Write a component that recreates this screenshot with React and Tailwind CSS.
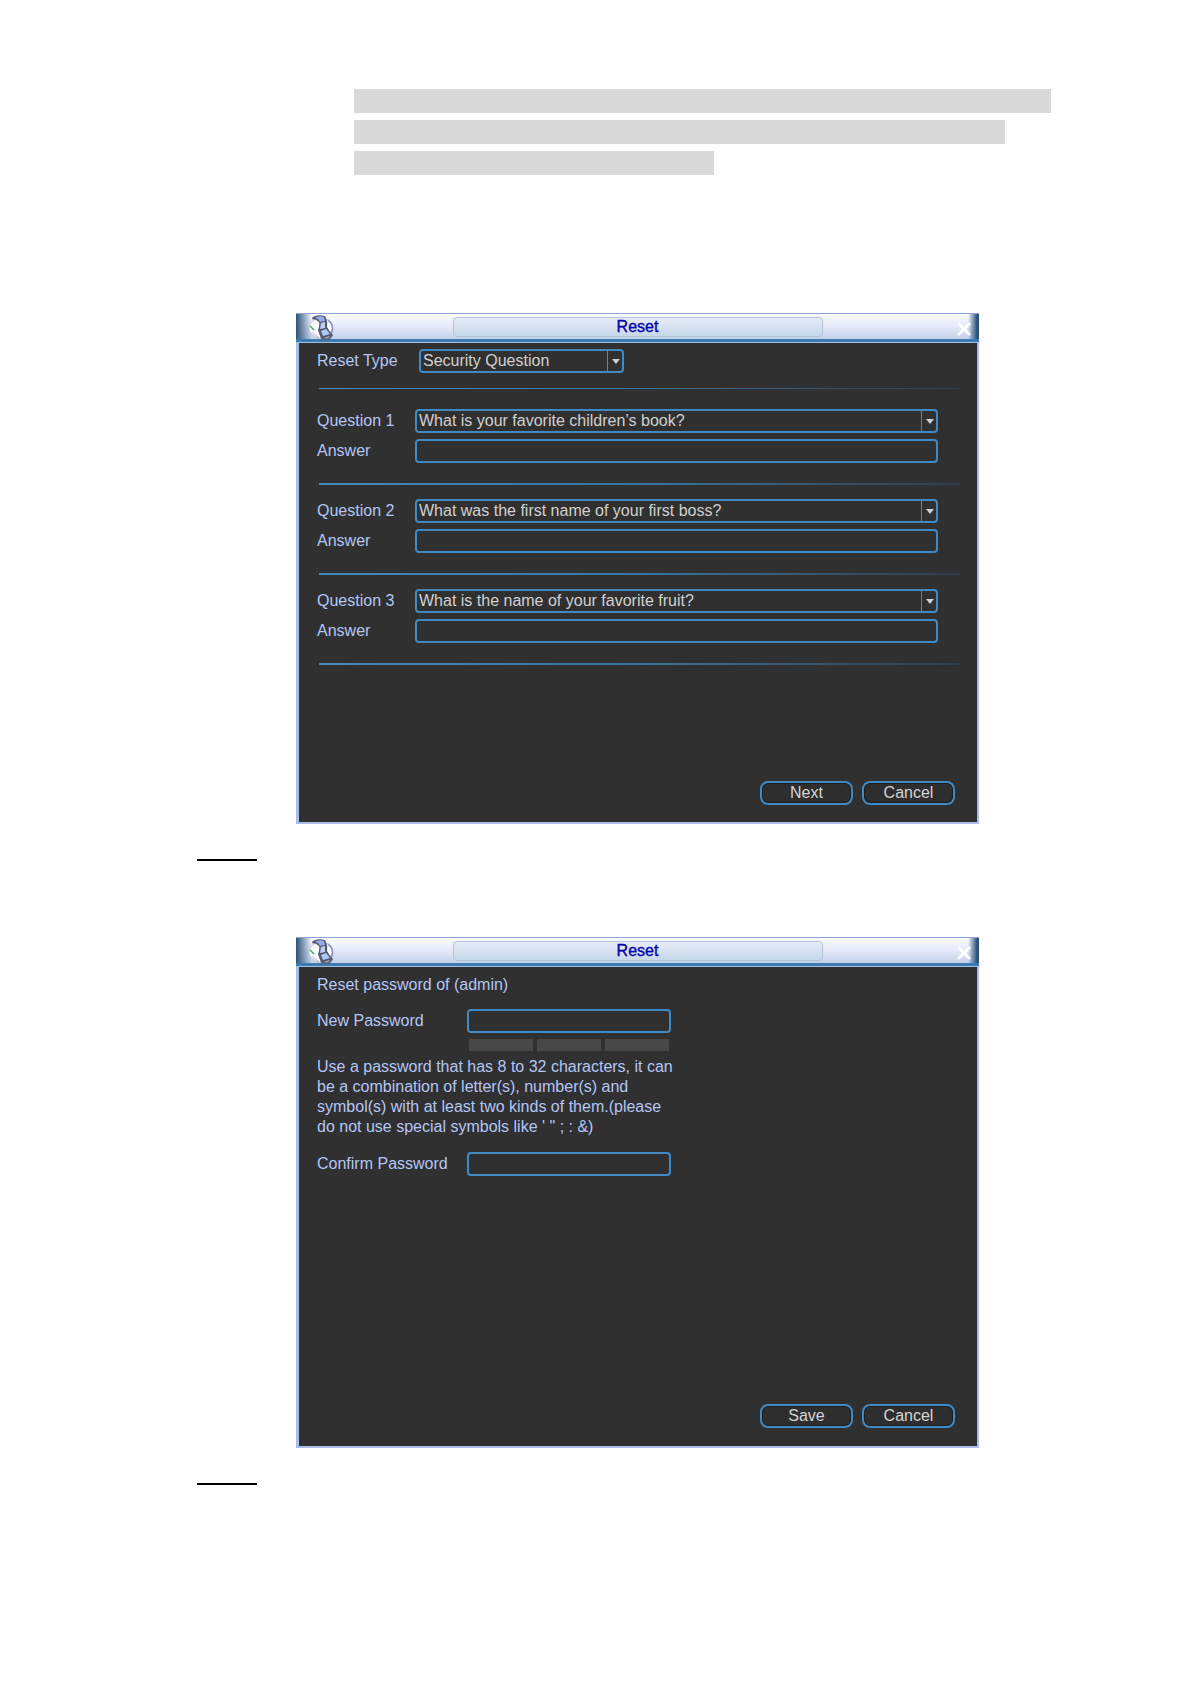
import React, { useState } from 'react'

const questions = [
    "What is your favorite children’s book?",
    "What was the first name of your first boss?",
    "What is the name of your favorite fruit?",
]

const FilmIcon = () => (
    <svg width="27" height="27" viewBox="0 0 27 27" fill="none" aria-hidden="true">
        <ellipse cx="14" cy="14" rx="12" ry="10" fill="#fafbff" stroke="#c3c4e2" />
        <path d="M3 12 L7 16" stroke="#3fa646" strokeWidth="1.5" />
        <path d="M5 18 Q8 22 12 23" stroke="#b9bcd2" strokeWidth="1" />
        <path d="M21 6 Q29 13 23 21" stroke="#8c88c4" strokeWidth="1.5" />
        <path
            d="M5 4 Q9 0 18 2 Q21 7 20 13 Q22 17 26 21 Q24 26 18 26 Q14 26 13 22 L11 16 Q13 11 12 8 Q9 5 5 5 Z"
            fill="#555a70"
        />
        <path d="M8 4 Q12 1 17 3 L18 7 L13 8 Q12 5 8 4 Z" fill="#93abde" />
        <path d="M14 9 L18 8 L18 14 L13 15 Z" fill="#b9cdf6" />
        <path d="M14 17 L19 15 L23 20 L16 22 Z" fill="#acc9f8" />
        <path d="M17 24 L22 22 L23 23 L19 25 Z" fill="#9aa1b5" />
    </svg>
)

const Window = ({ title, children }) => (
    <section className="ml-[99px] mr-[72px] flex min-h-[511px] flex-col">
        {/* TITLE BAR */}
        <header className="flex h-[29px] items-start border-t border-b-3 border-t-[#8ea4d6] border-b-[#3b7db3] bg-[linear-gradient(90deg,#2c5378,transparent_16px,transparent_calc(100%-11px),#2c5378_calc(100%-2px)),linear-gradient(180deg,#f8faff,#e4e9f8_50%,#c3cfe9)] pl-[11px] pr-2">
            <FilmIcon />
            <div className="mr-4 flex flex-1 justify-center">
                <h2 className="mt-[3px] h-5 w-[370px] rounded-sm border border-[#b4c6de] bg-linear-to-b from-[#e6ebf8] to-[#c6d8ea] text-center text-base leading-[18px] text-[#0505a8] [-webkit-text-stroke:0.4px_#0505a8]">
                    {title}
                </h2>
            </div>
            <button type="button" aria-label="Close" className="mt-2">
                <svg width="14" height="14" viewBox="0 0 14 14" stroke="#ffffff" strokeWidth="2.6">
                    <path d="M1 1 L13 13 M13 1 L1 13" />
                </svg>
            </button>
        </header>

        {/* CONTENT */}
        <div className="flex flex-1 flex-col border-2 border-t border-l-3 border-[#aabce8] bg-[#303030] pl-[18px] pr-[22px] text-base text-[#b4c6f6]">
            {children}
        </div>
    </section>
)

const Select = ({ options, className = "", ...props }) => (
    <div className={`relative h-6 ${className}`}>
        <select
            className="h-6 w-full appearance-none rounded-sm border-2 border-[#3f89c4] bg-[#303030] pl-0.5 pr-5 text-base leading-5 text-[#d0d0d0] outline-none"
            {...props}
        >
            {options.map((option) => (
                <option key={option}>{option}</option>
            ))}
        </select>
        <span className="pointer-events-none absolute inset-y-0 right-0 flex w-[17px] items-center justify-center border-l border-[#3f89c4]">
            <svg width="8" height="5" viewBox="0 0 8 5" fill="#d0d0d0">
                <path d="M0 0 H8 L4 5 Z" />
            </svg>
        </span>
    </div>
)

const TextBox = (props) => (
    <input
        className="h-6 w-full rounded-sm border-2 border-[#3f89c4] bg-[#303030] px-1 text-base text-[#d0d0d0] outline-none"
        {...props}
    />
)

const Button = ({ children }) => (
    <button
        type="button"
        className="h-6 w-[93px] rounded-lg border-2 border-[#3f89c4] bg-[#2e2e2e] text-base leading-5 text-[#d4d4d4] inset-ring inset-ring-[#1c1c1c]"
    >
        {children}
    </button>
)

const Separator = ({ className }) => (
    <hr className={`ml-0.5 mr-[-5px] border-0 bg-linear-to-r from-[#418ac0] via-[#39759f] to-[#303d4a] ${className}`} />
)

const Question = ({ number, question }) => (
    <div className="mr-[17px] grid grid-cols-[98px_1fr] gap-y-1.5 leading-6">
        <label htmlFor={`question-${number}`}>Question {number}</label>
        <Select id={`question-${number}`} options={questions} defaultValue={question} />
        <label htmlFor={`answer-${number}`}>Answer</label>
        <TextBox id={`answer-${number}`} type="text" />
    </div>
)

const SecurityQuestions = () => {
    const [resetType, setResetType] = useState("Security Question")

    return (
        <Window title="Reset">
            <div className="mt-1.5 mb-[15px] flex leading-6">
                <label htmlFor="reset-type" className="w-[102px]">Reset Type</label>
                <Select
                    id="reset-type"
                    className="w-[205px]"
                    options={["Security Question", "Email"]}
                    value={resetType}
                    onChange={(e) => setResetType(e.target.value)}
                />
            </div>
            <Separator className="mb-5 h-px" />

            {questions.map((question, i) => (
                <React.Fragment key={question}>
                    <Question number={i + 1} question={question} />
                    <Separator className="mt-5 mb-3.5 h-0.5" />
                </React.Fragment>
            ))}

            <div className="mt-auto mb-[17px] flex justify-end gap-[9px]">
                <Button>Next</Button>
                <Button>Cancel</Button>
            </div>
        </Window>
    )
}

const NewPassword = () => (
    <Window title="Reset">
        <p className="mt-1.5 leading-6">Reset password of (admin)</p>

        <div className="mt-3 grid grid-cols-[150px_204px] leading-6">
            <label htmlFor="new-password">New Password</label>
            <TextBox id="new-password" type="password" />

            {/* STRENGTH METER */}
            <div className="col-start-2 mx-0.5 mt-1.5 flex h-3 gap-1">
                <span className="flex-1 bg-[#484848]" />
                <span className="flex-1 bg-[#484848]" />
                <span className="flex-1 bg-[#484848]" />
            </div>
        </div>

        <p className="mt-1.5 leading-5">
            Use a password that has 8 to 32 characters, it can<br />
            be a combination of letter(s), number(s) and<br />
            symbol(s) with at least two kinds of them.(please<br />
            do not use special symbols like ' " ; : &amp;)
        </p>

        <div className="mt-[15px] grid grid-cols-[150px_204px] leading-6">
            <label htmlFor="confirm-password">Confirm Password</label>
            <TextBox id="confirm-password" type="password" />
        </div>

        <div className="mt-auto mb-[18px] flex justify-end gap-[9px]">
            <Button>Save</Button>
            <Button>Cancel</Button>
        </div>
    </Window>
)

const App = () => {
    return (
        <main className="min-h-screen bg-white pt-[89px] pr-[140px] pb-20 pl-[197px] font-['Liberation_Sans',Arial,sans-serif]">

            {/* HIGHLIGHTED LINES */}
            <div className="ml-[157px] mb-[138px] space-y-[7px]">
                <div className="h-6 bg-[#d9d9d9]" />
                <div className="h-6 w-[651px] max-w-full bg-[#d9d9d9]" />
                <div className="h-6 w-[360px] max-w-full bg-[#d9d9d9]" />
            </div>

            <SecurityQuestions />
            <hr className="mt-[35px] mb-[76px] h-0.5 w-[60px] border-0 bg-black" />

            <NewPassword />
            <hr className="mt-[35px] h-0.5 w-[60px] border-0 bg-black" />
        </main>
    )
}

export default App
